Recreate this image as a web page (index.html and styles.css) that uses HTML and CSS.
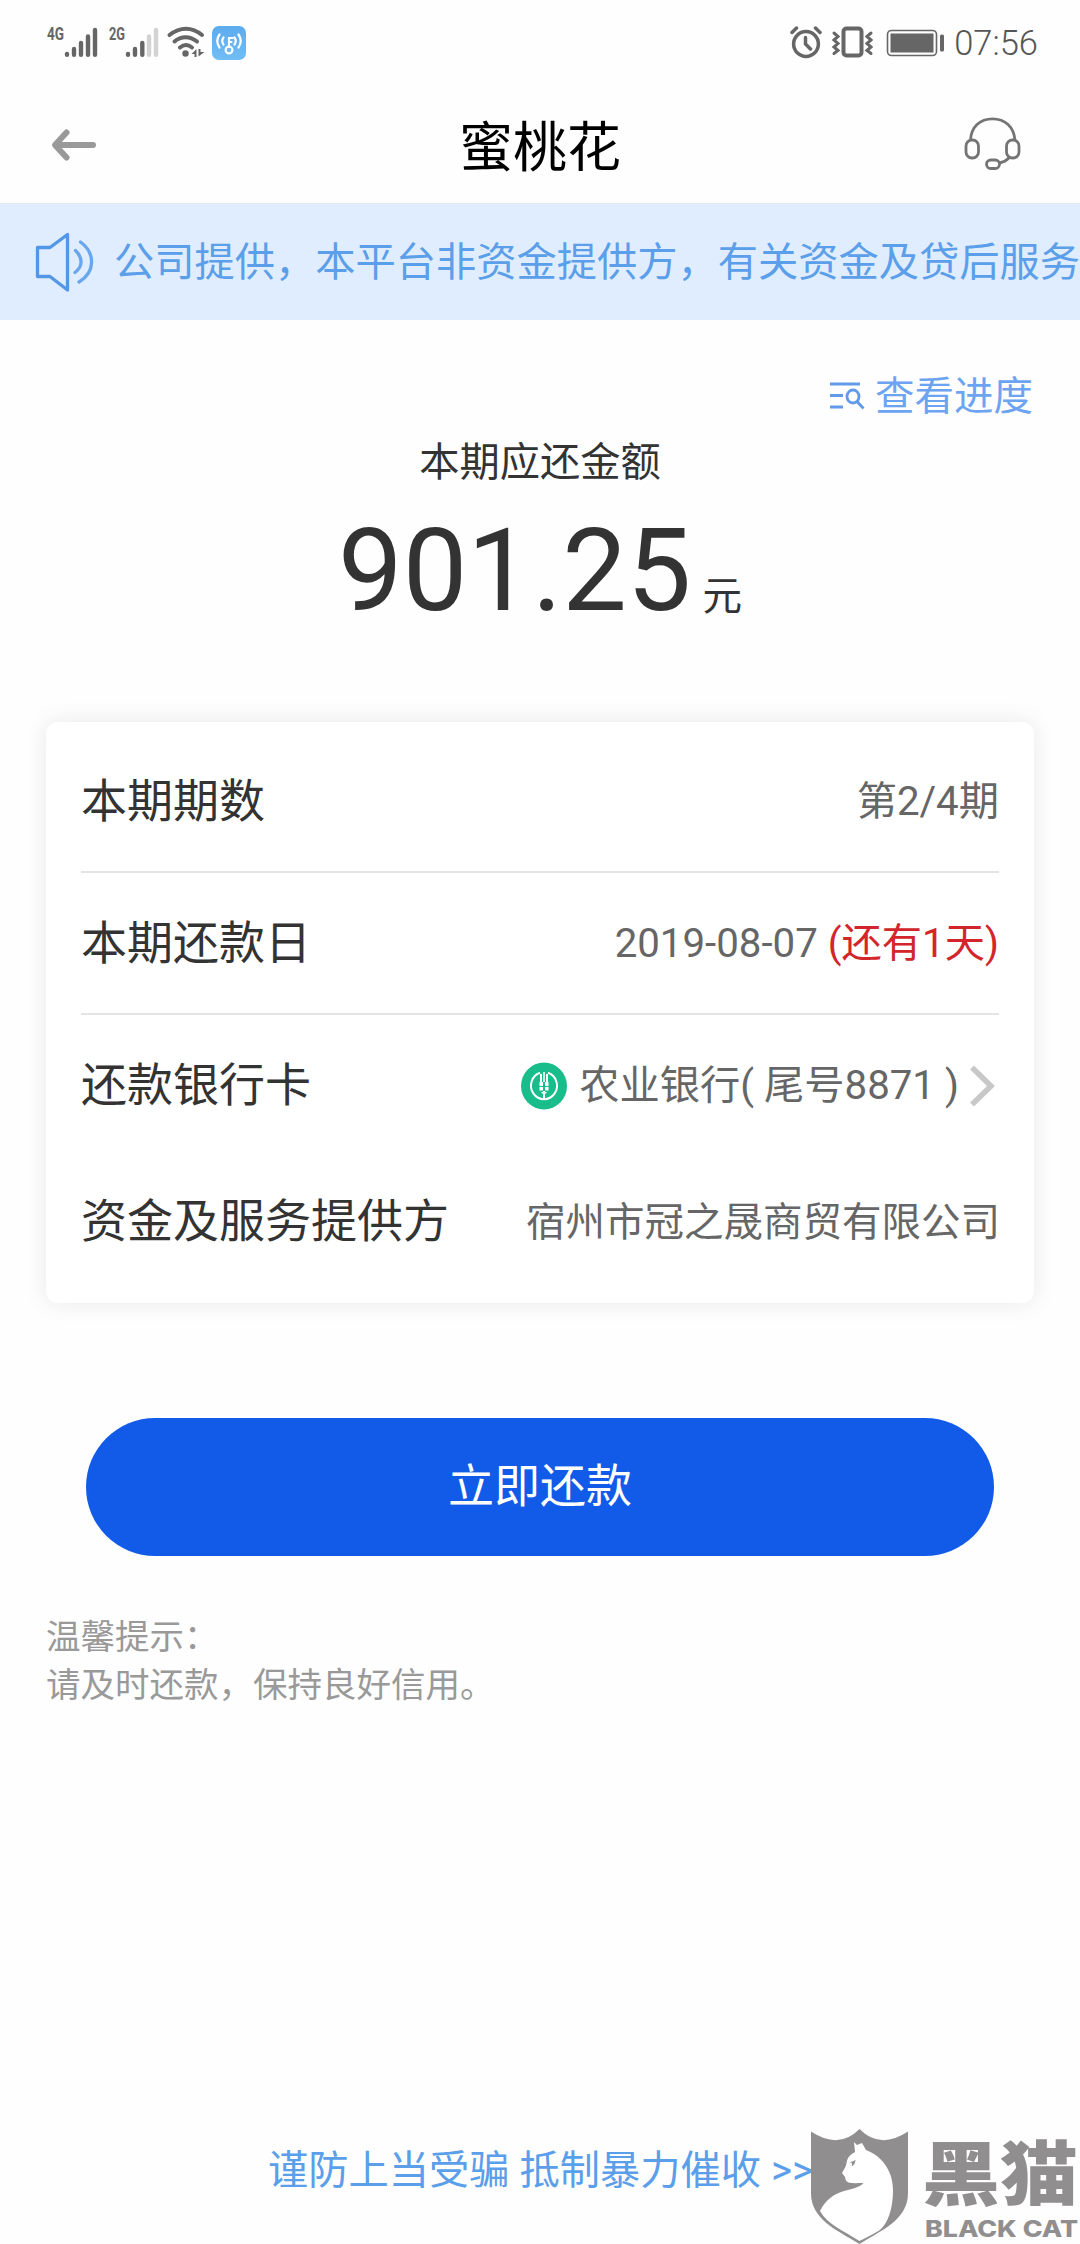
FILE: index.html
```html
<!DOCTYPE html>
<html lang="zh-CN">
<head>
<meta charset="utf-8">
<title>蜜桃花</title>
<link rel="stylesheet" href="styles.css">
</head>
<body>
<div class="status">
  <svg class="status-left" width="202" height="40" viewBox="0 0 202 40">
    <text class="net" x="1" y="20" textLength="17" lengthAdjust="spacingAndGlyphs">4G</text>
    <g stroke="#666" stroke-width="4.4" stroke-linecap="round"><path d="M21 34v.7M28 29V34.700M35 23V34.700M42 16.500V34.700M49 10V34.700"/></g>
    <text class="net" x="63" y="20" textLength="16" lengthAdjust="spacingAndGlyphs">2G</text>
    <g stroke="#666" stroke-width="4.4" stroke-linecap="round"><path d="M82 34v.7M89 29V34.700M96.300 23V34.700"/><path stroke="#d3d3d3" d="M103 16.500V34.700M110 10V34.700"/></g>
    <g fill="none" stroke="#666" stroke-width="4" stroke-linecap="round"><path d="M123.500 15C134 6.500 146 6.500 156 15M128.500 21.500C135 15.800 144 15.800 151 21.500M134 27.500Q140 22.500 146 27.500"/></g>
    <circle cx="139.500" cy="33.500" r="3.200" fill="#666"/>
    <path fill="#666" d="M150.500 29v8h-2v-3h-3zM152.500 36.500V29h2v3h4z"/>
    <defs><linearGradient id="tile" x2="0" y2="1"><stop stop-color="#5cabee"/><stop offset="1" stop-color="#71bdf5"/></linearGradient></defs>
    <rect x="166" y="6" width="34" height="34" rx="7" fill="url(#tile)"/>
    <g fill="none" stroke="#fff" stroke-width="2.200" stroke-linecap="round"><circle cx="183" cy="30" r="3.400"/><path d="M183 26.500V18h3.500M183 22h2.500M177.500 17.500q-2.500 3.500 0 7M188.500 17.500q2.500 3.500 0 7M173.500 14.500q-4.500 6.500 0 13M192.500 14.500q4.500 6.500 0 13"/></g>
  </svg>
  <div class="status-right">
    <svg width="156" height="40" viewBox="0 0 156 40">
      <g fill="none" stroke="#666" stroke-linecap="round" stroke-linejoin="round">
        <g stroke-width="3.500"><circle cx="16" cy="24" r="12.400"/><path d="M15.500 17.500V24l5 5M2 12.500l4.500-4.500M25.500 8l4.500 4.500"/></g>
        <rect x="53.500" y="8.500" width="18" height="27" rx="3" stroke-width="4"/>
        <path stroke-width="3" stroke-linejoin="miter" d="M44 13l4 3.500-4 3.500 4 3.500-4 3.500 4 3.500-4 3M81 13l-4 3.500 4 3.500-4 3.500 4 3.500-4 3.500 4 3"/>
        <rect x="97.500" y="10.500" width="49" height="25" rx="4" stroke-width="1.600"/>
      </g>
      <rect x="100.500" y="13.500" width="43" height="19" fill="#666"/>
      <rect x="150" y="14.500" width="4" height="17" rx="1.600" fill="#666"/>
    </svg>
    <span class="clock">07:56</span>
  </div>
</div>

<header class="header">
  <svg class="back" width="48" height="36" viewBox="0 0 48 36" fill="none" stroke="#999" stroke-width="6" stroke-linecap="round" stroke-linejoin="round"><path d="M44 18H6.500M17.500 5.500L6 18l11.500 12.500"/></svg>
  <h1 class="title">蜜桃花</h1>
  <svg class="headset" width="58" height="56" viewBox="0 0 58 56" fill="none" stroke="#747474" stroke-width="2.800"><rect x="3" y="24" width="12.500" height="18" rx="6"/><rect x="43.500" y="24" width="12.500" height="18" rx="6"/><path d="M7.500 24.500C8 11 17 2.800 29.500 2.800S51 11 52 24.500M46.500 41.500Q42 46 36.500 47"/><rect x="23.500" y="44" width="13" height="8.500" rx="4.200"/></svg>
</header>

<div class="notice">
  <svg width="64" height="60" viewBox="0 0 64 60" fill="none" stroke="#5296e5" stroke-width="3.300" stroke-linejoin="round"><path d="M34.500 2.500v55.500L17 44.500H4.500V15.500H17z"/><g stroke="#69a6ec" stroke-linecap="round"><path d="M42.500 18.500C50 26 50 34.500 42 40.500M47.500 10C62.500 21 62.500 40 46 50"/></g></svg>
  <p class="notice-text">公司提供，本平台非资金提供方，有关资金及贷后服务</p>
</div>

<main class="main">
  <a class="progress">
    <svg width="38" height="30" viewBox="0 0 38 30" fill="none" stroke="#619ae9" stroke-width="2.800"><path d="M2 2h30M2 13.500h13M2 25h13M28.500 19l7 7.500"/><ellipse cx="25" cy="14.500" rx="6" ry="6.500"/></svg>
    <span>查看进度</span>
  </a>
  <p class="caption">本期应还金额</p>
  <p class="amount"><span class="number">901.25</span><span class="unit">元</span></p>

  <section class="card">
    <div class="row lined"><span class="label">本期期数</span><span class="value">第2/4期</span></div>
    <div class="row lined"><span class="label">本期还款日</span><span class="value">2019-08-07 <em class="due">(还有1天)</em></span></div>
    <div class="row bank">
      <span class="label">还款银行卡</span>
      <span class="value bank-value">
        <svg width="46" height="48" viewBox="0 0 46 48"><ellipse cx="23" cy="24" rx="23" ry="23.500" fill="#19bd8b"/><g fill="none" stroke="#fff" stroke-width="2"><path d="M19 10.800A13 13.500 0 1 0 27 10.800M23 29v8.500"/></g><path fill="#fff" d="M19 12h2v8h-2zM22.200 10h1.600v10h-1.600zM25 12h2v8h-2zM18.500 20h3.500v4h-3.500zM24 20h3.500v4H24zM18.500 25h3.500v3.500h-3.500zM24 25h3.500v3.500H24zM20 30h6l-3 3z"/></svg>
        <span>农业银行( 尾号8871 )</span>
        <svg class="chevron" width="26" height="42" viewBox="0 0 26 42" fill="none" stroke="#c8c8c8" stroke-width="5.500"><path d="M2 2.500L21 21 2 39.500"/></svg>
      </span>
    </div>
    <div class="row provider"><span class="label">资金及服务提供方</span><span class="value">宿州市冠之晟商贸有限公司</span></div>
  </section>

  <button class="pay">立即还款</button>
  <div class="tips"><p>温馨提示：</p><p>请及时还款，保持良好信用。</p></div>
</main>

<footer class="footer">谨防上当受骗 抵制暴力催收 &gt;&gt;</footer>

<svg class="watermark" width="270" height="118" viewBox="0 0 270 118">
  <path fill="#908e8f" d="M1 5.500Q29 24 49.500 3Q70 24 98 5.500V67C98 93 74 103 49.500 118C25 103 1 93 1 67z"/>
  <path fill="#fff" d="M44 16l3 3 5-2 4 7C74 31 83 47 83 64c0 19-5 33-13 40-6 4-13 7-20.500 11C34 105 18 99 10 85c6-12 14-17 24-20 8-2.500 15-3 19.500-8-6 0-11 .5-15-.5-3-1.500-3-3.500-3.500-5.500L32 47c2-4 4-6 4.500-10 1-6 4-8.500 8.500-11z"/>
  <path fill="#908e8f" d="M39 36.500q3.500-1 6.500-2.500-.5 5-4 6.500 1-2 0-4z"/>
  <text class="wm-cn" x="112" y="74" textLength="156" lengthAdjust="spacingAndGlyphs">黑猫</text>
  <text class="wm-en" x="115" y="110.500" textLength="153" lengthAdjust="spacingAndGlyphs">BLACK CAT</text>
</svg>
</body>
</html>
```
FILE: styles.css
```css
* { box-sizing: border-box; }

body {
  margin: 0;
  width: 1080px;
  height: 2244px;
  display: flex;
  flex-direction: column;
  position: relative;
  overflow: hidden;
  background: #fefefe;
  color: #333;
  font-family: Roboto, "Noto Sans CJK SC", sans-serif;
}

p, h1 { margin: 0; font-weight: 400; }
svg { display: block; flex: none; }

.status {
  height: 90px;
  padding: 20px 42px 0 46px;
  display: flex;
  justify-content: space-between;
}
.net { font: 700 19px "Roboto", sans-serif; fill: #666; }
.status-right { display: flex; gap: 8px; }
.clock {
  font-size: 34.5px;
  font-weight: 300;
  line-height: 46px;
  height: 46px;
  color: #555;
}

.header {
  height: 113px;
  padding: 0 49px;
  display: grid;
  grid-template-columns: 1fr auto 1fr;
  align-items: center;
}
.back { margin-bottom: 3px; }
.title { font-size: 54px; line-height: 80px; color: #000; padding-top: 4px; }
.headset { justify-self: end; margin: 0 10px 5px 0; }

.notice {
  height: 117px;
  padding-left: 33px;
  display: flex;
  align-items: center;
  gap: 17px;
  background: #e0edfe;
  border-top: 1px solid #e4eaf1;
}
.notice-text {
  font-size: 40.25px;
  line-height: 60px;
  padding-top: 2px;
  white-space: nowrap;
  color: #5b9ee9;
}

.main { flex: 1; padding: 0 46px; display: flex; flex-direction: column; }

.progress {
  align-self: flex-end;
  display: flex;
  align-items: center;
  gap: 9px;
  margin: 47px 1px 0 0;
  font-size: 39.5px;
  line-height: 60px;
  color: #6da4f2;
}
.caption { margin-top: 6px; text-align: center; font-size: 40.25px; line-height: 60px; }
.amount { display: flex; justify-content: center; align-items: baseline; gap: 11px; height: 136px; margin-top: 9px; }
.number { font-size: 115px; line-height: 138px; }
.unit { font-size: 39.5px; }

.card {
  margin-top: 84px;
  height: 581px;
  padding: 9px 35px 0;
  border-radius: 12px;
  background: #fff;
  box-shadow: 0 0 24px rgba(0, 0, 0, .09);
}
.row { height: 142px; display: flex; align-items: center; justify-content: space-between; }
.lined { border-bottom: 2px solid #e4e4e4; }
.lined .value { padding-top: 2px; }
.label { font-size: 46px; line-height: 66px; }
.bank .label, .provider .label { padding-bottom: 2px; }
.value { font-size: 40.25px; line-height: 60px; color: #666; white-space: pre; }
.due { font-style: normal; color: #d3262c; }
.bank-value { display: flex; align-items: center; gap: 12px; }
.chevron { margin: 0 3px 0 -1px; }
.provider { height: 130px; }
.provider .value { font-size: 39.5px; padding-top: 1px; margin-right: -1px; }

.pay {
  margin: 115px 40px 0;
  height: 138px;
  padding: 0 0 3px;
  border: 0;
  border-radius: 69px;
  background: #125be8;
  color: #fff;
  font: 46px/66px Roboto, "Noto Sans CJK SC", sans-serif;
}
.tips { margin-top: 57px; font-size: 34.5px; line-height: 48px; color: #999; }

.footer {
  height: 103px;
  padding-left: 268px;
  font-size: 40.25px;
  line-height: 60px;
  color: #5b9ee9;
}

.watermark { position: absolute; left: 810px; top: 2126px; }
.wm-cn { font: 900 70px "Noto Sans CJK SC", sans-serif; fill: #908e8f; }
.wm-en { font: 800 23px Inter, sans-serif; fill: #908e8f; }
```
